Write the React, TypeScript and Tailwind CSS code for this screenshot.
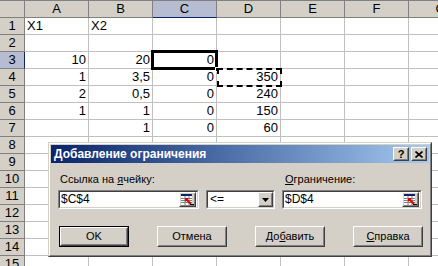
import React from 'react';

const cols = ['A', 'B', 'C', 'D', 'E', 'F', 'G'];
const colWidths = [64, 64, 64, 64, 64, 64, 64];

const data: Record<number, string[]> = {
  1: ['X1', 'X2', '', '', '', '', ''],
  3: ['10', '20', '0', '', '', '', ''],
  4: ['1', '3,5', '0', '350', '', '', ''],
  5: ['2', '0,5', '0', '240', '', '', ''],
  6: ['1', '1', '0', '150', '', '', ''],
  7: ['', '1', '0', '60', '', '', ''],
};

const isNum = (s: string) => /^[0-9,]+$/.test(s);

const Raised: React.FC<{ className?: string; children?: React.ReactNode }> = ({ className = '', children }) => (
  <div className={`border border-t-white border-l-white border-r-[#404040] border-b-[#404040] bg-[#d4d0c8] ${className}`}>
    <div className="w-full h-full border border-t-[#d4d0c8] border-l-[#d4d0c8] border-r-[#808080] border-b-[#808080] flex items-center justify-center">
      {children}
    </div>
  </div>
);

const Sunken: React.FC<{ className?: string; children?: React.ReactNode }> = ({ className = '', children }) => (
  <div className={`border border-t-[#808080] border-l-[#808080] border-r-white border-b-white ${className}`}>
    <div className="w-full h-full border border-t-[#404040] border-l-[#404040] border-r-[#d4d0c8] border-b-[#d4d0c8] bg-white flex items-center">
      {children}
    </div>
  </div>
);

const RefIcon = () => (
  <svg width="13" height="11" viewBox="0 0 13 11">
    <rect x="0" y="0" width="11" height="2" fill="#0a246a" />
    <rect x="0" y="2" width="11" height="9" fill="#fff" />
    <path d="M0 4.5h11M0 6.5h11M0 8.5h11M4 2v9M8 2v9" stroke="#808080" strokeWidth="1" />
    <path d="M5 5l5 5" stroke="#e00000" strokeWidth="2" />
    <path d="M4 4h4l-4 4z" fill="#e00000" />
    <rect x="9" y="10" width="4" height="1" fill="#000" />
  </svg>
);

const RefInput: React.FC<{ value: string; width: string }> = ({ value, width }) => (
  <Sunken className={`${width} h-[19px]`}>
    <span className="flex-1 pl-[1px] text-[12px] leading-[15px] text-black">{value}</span>
    <Raised className="w-[17px] h-[15px] mr-[1px]">
      <RefIcon />
    </Raised>
  </Sunken>
);

const Button: React.FC<{ children: React.ReactNode; isDefault?: boolean }> = ({ children, isDefault }) => (
  <div className={`w-[70px] h-[21px] ${isDefault ? 'border border-black' : ''}`}>
    <Raised className="w-full h-full">
      <span className="text-[11px] text-black">{children}</span>
    </Raised>
  </div>
);

export default function App() {
  const rows = Array.from({ length: 15 }, (_, i) => i + 1);
  return (
    <div className="relative w-[438px] h-[266px] overflow-hidden bg-white font-['Liberation_Sans',Arial,sans-serif]">
      {/* column headers */}
      <div className="flex h-[18px] border-t border-[#808080] bg-[#d4d0c8]">
        <div className="w-[25px] shrink-0 border-r border-b border-[#808080]" />
        {cols.map((c, i) => (
          <div
            key={c}
            style={{ width: colWidths[i] }}
            className={`shrink-0 border-r text-center text-[13px] leading-[16px] text-black ${
              c === 'C' ? 'bg-[#b6bdd2] border-b border-b-[#0a246a] border-r-[#808080]' : 'border-b border-[#808080]'
            }`}
          >
            {c}
          </div>
        ))}
      </div>
      {rows.map((r) => (
        <div key={r} className="flex h-[17px]">
          <div
            className={`w-[25px] shrink-0 border-b text-center text-[13px] leading-[16px] text-black ${
              r === 3 ? 'bg-[#b6bdd2] border-r border-r-[#0a246a] border-b-[#808080]' : 'bg-[#d4d0c8] border-r border-[#808080]'
            }`}
          >
            {r}
          </div>
          {cols.map((c, i) => {
            const v = data[r]?.[i] ?? '';
            return (
              <div
                key={c}
                style={{ width: colWidths[i] }}
                className={`shrink-0 border-r border-b border-[#c0c0c0] px-[2px] text-[13px] leading-[16px] text-black overflow-hidden whitespace-nowrap ${
                  isNum(v) ? 'text-right' : 'text-left'
                }`}
              >
                {v}
              </div>
            );
          })}
        </div>
      ))}

      {/* active cell C3 */}
      <div className="absolute left-[151px] top-[50px] w-[67px] h-[20px] border-[3px] border-black" />
      <div className="absolute left-[215px] top-[67px] w-[5px] h-[5px] bg-black border border-white" />
      {/* copy marquee D4 */}
      <div className="absolute left-[217px] top-[68px] w-[65px] h-[19px] border-2 border-dashed border-black" />

      {/* dialog */}
      <div className="absolute left-[48px] top-[142px] w-[384px] h-[115px] border border-t-[#d4d0c8] border-l-[#d4d0c8] border-r-[#404040] border-b-[#404040] bg-[#d4d0c8]">
        <div className="w-full h-full border border-t-white border-l-white border-r-[#808080] border-b-[#808080] p-[1px] flex flex-col">
          <div className="h-[18px] flex items-center pl-[3px] pr-[2px] bg-gradient-to-r from-[#0a246a] to-[#a6caf0]">
            <span className="flex-1 text-white font-bold text-[12px] leading-[14px]">Добавление ограничения</span>
            <Raised className="w-[16px] h-[14px]">
              <span className="text-[11px] font-bold leading-[10px] text-black">?</span>
            </Raised>
            <Raised className="w-[16px] h-[14px] ml-[2px]">
              <svg width="8" height="7" viewBox="0 0 8 7">
                <path d="M0.5 0.5l7 6M7.5 0.5l-7 6" stroke="#000" strokeWidth="1.6" />
              </svg>
            </Raised>
          </div>

          <div className="grid grid-cols-[141px_69px_140px] gap-x-[7px] pl-[7px] mt-[10px]">
            <div className="pl-[2px] text-[11px] leading-[13px] text-black">
              Ссылка на <span className="underline">я</span>чейку:
            </div>
            <div />
            <div className="pl-[3px] text-[11px] leading-[13px] text-black">
              <span className="underline">О</span>граничение:
            </div>
            <div className="mt-[4px]">
              <RefInput value="$C$4" width="w-[141px]" />
            </div>
            <div className="mt-[4px]">
              <Sunken className="w-[69px] h-[19px]">
                <span className="flex-1 pl-[2px] text-[12px] leading-[15px] text-black">&lt;=</span>
                <Raised className="w-[15px] h-[15px]">
                  <svg width="7" height="4" viewBox="0 0 7 4">
                    <path d="M0 0h7L3.5 4z" fill="#000" />
                  </svg>
                </Raised>
              </Sunken>
            </div>
            <div className="mt-[4px]">
              <RefInput value="$D$4" width="w-[140px]" />
            </div>
          </div>

          <div className="flex gap-[28px] pl-[8px] mt-[17px]">
            <Button isDefault>OK</Button>
            <Button>Отмена</Button>
            <Button>
              До<span className="underline">б</span>авить
            </Button>
            <Button>
              <span className="underline">С</span>правка
            </Button>
          </div>
        </div>
      </div>
    </div>
  );
}
